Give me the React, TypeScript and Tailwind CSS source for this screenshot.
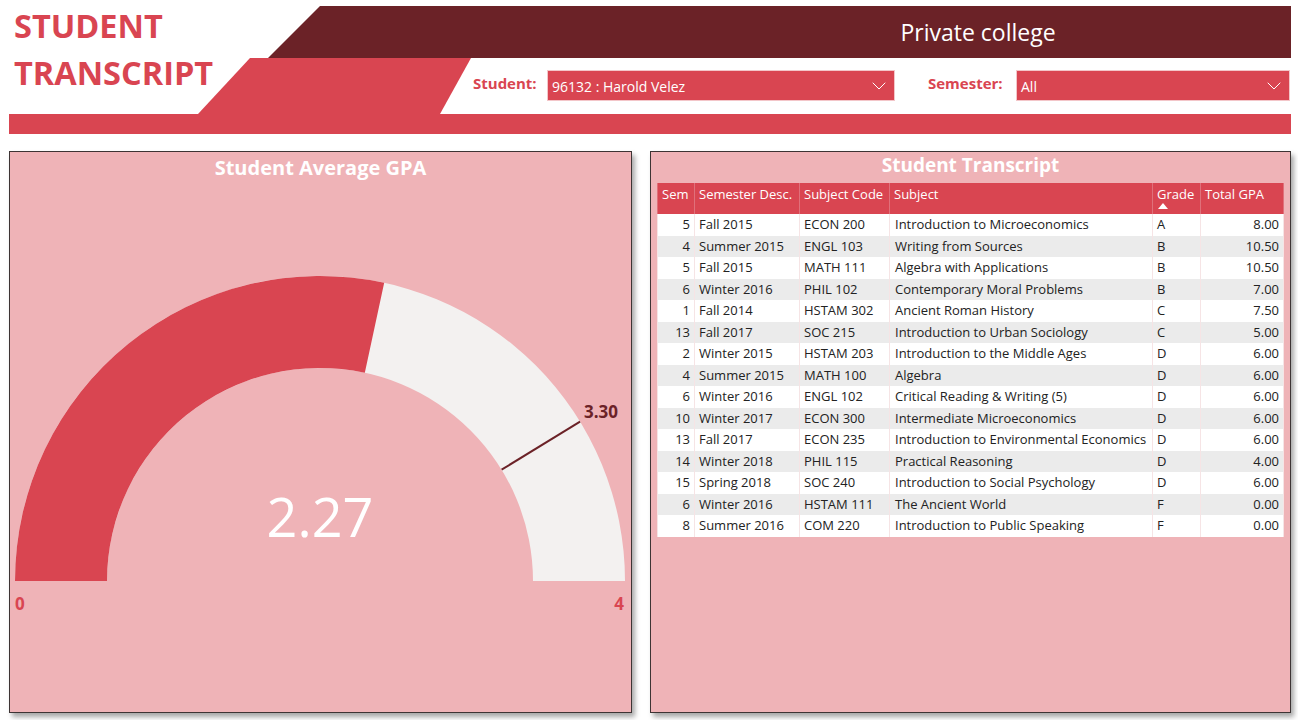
import { ChevronDown } from "lucide-react";

interface Row {
  sem: number;
  desc: string;
  code: string;
  subject: string;
  grade: string;
  gpa: string;
}

const rows: Row[] = [
  { sem: 5, desc: "Fall 2015", code: "ECON 200", subject: "Introduction to Microeconomics", grade: "A", gpa: "8.00" },
  { sem: 4, desc: "Summer 2015", code: "ENGL 103", subject: "Writing from Sources", grade: "B", gpa: "10.50" },
  { sem: 5, desc: "Fall 2015", code: "MATH 111", subject: "Algebra with Applications", grade: "B", gpa: "10.50" },
  { sem: 6, desc: "Winter 2016", code: "PHIL 102", subject: "Contemporary Moral Problems", grade: "B", gpa: "7.00" },
  { sem: 1, desc: "Fall 2014", code: "HSTAM 302", subject: "Ancient Roman History", grade: "C", gpa: "7.50" },
  { sem: 13, desc: "Fall 2017", code: "SOC 215", subject: "Introduction to Urban Sociology", grade: "C", gpa: "5.00" },
  { sem: 2, desc: "Winter 2015", code: "HSTAM 203", subject: "Introduction to the Middle Ages", grade: "D", gpa: "6.00" },
  { sem: 4, desc: "Summer 2015", code: "MATH 100", subject: "Algebra", grade: "D", gpa: "6.00" },
  { sem: 6, desc: "Winter 2016", code: "ENGL 102", subject: "Critical Reading & Writing (5)", grade: "D", gpa: "6.00" },
  { sem: 10, desc: "Winter 2017", code: "ECON 300", subject: "Intermediate Microeconomics", grade: "D", gpa: "6.00" },
  { sem: 13, desc: "Fall 2017", code: "ECON 235", subject: "Introduction to Environmental Economics", grade: "D", gpa: "6.00" },
  { sem: 14, desc: "Winter 2018", code: "PHIL 115", subject: "Practical Reasoning", grade: "D", gpa: "4.00" },
  { sem: 15, desc: "Spring 2018", code: "SOC 240", subject: "Introduction to Social Psychology", grade: "D", gpa: "6.00" },
  { sem: 6, desc: "Winter 2016", code: "HSTAM 111", subject: "The Ancient World", grade: "F", gpa: "0.00" },
  { sem: 8, desc: "Summer 2016", code: "COM 220", subject: "Introduction to Public Speaking", grade: "F", gpa: "0.00" },
];

const font = { fontFamily: '"Open Sans", "Noto Sans", sans-serif' };

const Dropdown = ({ value, width }: { value: string; width: string }) => (
  <div className={`${width} h-[31px] bg-[#d94551] border border-[#f3c6c9] flex items-center justify-between pl-[4px] pr-[3px] text-white text-[14px]`}>
    <span className="pt-[2px]">{value}</span>
    <ChevronDown size={24} strokeWidth={1} className="text-white" />
  </div>
);

const Header = () => (
  <header className="relative h-[134px] bg-white">
    <svg className="absolute inset-0" width="1298" height="134" viewBox="0 0 1298 134">
      <polygon points="320,6 1291,6 1291,58 268,58" fill="#6b2227" />
      <polygon points="250,58 471,58 440,114 198,114" fill="#d94551" />
      <rect x="9" y="114" width="1282" height="20" fill="#d94551" />
    </svg>
    <div className="relative flex">
      <h1 className="w-[250px] pl-[14px] pt-[2px] text-[32.5px] leading-[47px] font-bold text-[#d94551]">
        STUDENT
        <br />
        TRANSCRIPT
      </h1>
      <div className="flex-1 flex flex-col">
        <div className="h-[58px] flex items-center justify-center pl-[416px] pr-[8px] pt-[6px]">
          <span className="text-white text-[23px]">Private college</span>
        </div>
        <div className="flex items-center pt-[12px] pl-[223px] gap-[4px]">
          <span className="text-[#d94551] font-bold text-[15px] pb-[4px] w-[70px]">Student:</span>
          <Dropdown value="96132 : Harold Velez" width="w-[348px]" />
          <span className="text-[#d94551] font-bold text-[15px] pb-[4px] ml-[29px] w-[84px]">Semester:</span>
          <Dropdown value="All" width="w-[274px]" />
        </div>
      </div>
    </div>
  </header>
);

const Gauge = () => {
  const cx = 310;
  const cy = 395;
  const R = 305;
  const r = 213;
  const frac = 2.27 / 4;
  const a = Math.PI * (1 - frac);
  const ox = cx + R * Math.cos(a);
  const oy = cy - R * Math.sin(a);
  const ix = cx + r * Math.cos(a);
  const iy = cy - r * Math.sin(a);
  const t = Math.PI * (1 - 3.3 / 4);
  return (
    <svg width="621" height="430" viewBox="0 0 621 430" style={font}>
      <path
        d={`M${cx - R} ${cy} A${R} ${R} 0 0 1 ${cx + R} ${cy} L${cx + r} ${cy} A${r} ${r} 0 0 0 ${cx - r} ${cy} Z`}
        fill="#f3f1f0"
      />
      <path
        d={`M${cx - R} ${cy} A${R} ${R} 0 0 1 ${ox} ${oy} L${ix} ${iy} A${r} ${r} 0 0 0 ${cx - r} ${cy} Z`}
        fill="#d94551"
      />
      <line
        x1={cx + r * Math.cos(t)}
        y1={cy - r * Math.sin(t)}
        x2={cx + R * Math.cos(t)}
        y2={cy - R * Math.sin(t)}
        stroke="#6b2227"
        strokeWidth="2"
      />
      <text x="574" y="232" fontSize="17" fontWeight="700" fill="#6b2227">3.30</text>
      <text x={cx} y="351" fontSize="54" fill="#ffffff" textAnchor="middle">2.27</text>
      <text x="5" y="424" fontSize="17" fontWeight="700" fill="#d94551">0</text>
      <text x="614" y="424" fontSize="17" fontWeight="700" fill="#d94551" textAnchor="end">4</text>
    </svg>
  );
};

const cols = [
  { label: "Sem", w: "w-[37px]" },
  { label: "Semester Desc.", w: "w-[105px]" },
  { label: "Subject Code", w: "w-[90px]" },
  { label: "Subject", w: "w-[263px]" },
  { label: "Grade", w: "w-[48px]" },
  { label: "Total GPA", w: "w-[83px]" },
];

const Transcript = () => (
  <table className="w-[626px] border-collapse text-[13px] table-fixed">
    <thead>
      <tr className="bg-[#d94551] text-white h-[31px] align-top">
        {cols.map((c) => (
          <th key={c.label} className={`${c.w} font-normal text-left px-[4px] pt-[2px] border-x border-[#e0707a]`}>
            <div className="leading-[18px] whitespace-nowrap">{c.label}</div>
            {c.label === "Grade" && (
              <div className="leading-[6px] pl-[1px]">
                <svg width="10" height="6" viewBox="0 0 10 6">
                  <polygon points="0,6 5,0 10,6" fill="#ffffff" />
                </svg>
              </div>
            )}
          </th>
        ))}
      </tr>
    </thead>
    <tbody>
      {rows.map((r, i) => (
        <tr key={i} className={`h-[21.5px] text-[#222] ${i % 2 === 0 ? "bg-white" : "bg-[#ebebeb]"}`}>
          <td className="text-right px-[4px] border-x border-[#f6e4e5]">{r.sem}</td>
          <td className="px-[4px] border-x border-[#f6e4e5] whitespace-nowrap">{r.desc}</td>
          <td className="px-[4px] border-x border-[#f6e4e5] whitespace-nowrap">{r.code}</td>
          <td className="px-[5px] border-x border-[#f6e4e5] whitespace-nowrap">{r.subject}</td>
          <td className="px-[4px] border-x border-[#f6e4e5]">{r.grade}</td>
          <td className="text-right px-[4px] border-x border-[#f6e4e5]">{r.gpa}</td>
        </tr>
      ))}
    </tbody>
  </table>
);

export default function App() {
  return (
    <div className="w-[1298px] h-[720px] bg-white overflow-hidden" style={font}>
      <Header />
      <main className="flex gap-[18px] pl-[9px] pt-[17px]">
        <section className="w-[623px] h-[562px] bg-[#efb3b7] border border-[#3d3434] shadow-[3px_4px_5px_rgba(0,0,0,0.35)] flex flex-col">
          <h2 className="h-[34px] text-center text-white font-bold text-[20px] leading-[32px]">Student Average GPA</h2>
          <Gauge />
        </section>
        <section className="w-[641px] h-[562px] bg-[#efb3b7] border border-[#3d3434] shadow-[3px_4px_5px_rgba(0,0,0,0.35)] flex flex-col pl-[6px]">
          <h2 className="h-[31px] text-center text-white font-bold text-[19px] leading-[27px] pr-[6px]">Student Transcript</h2>
          <Transcript />
        </section>
      </main>
    </div>
  );
}
